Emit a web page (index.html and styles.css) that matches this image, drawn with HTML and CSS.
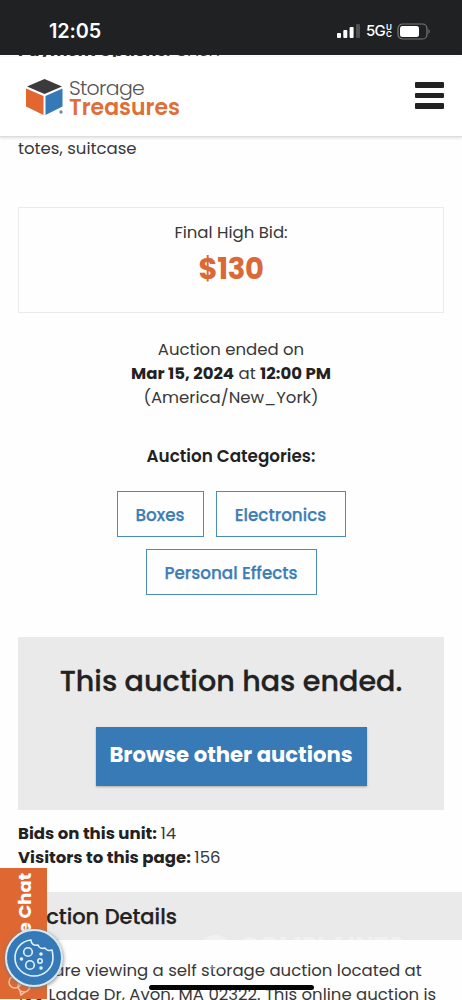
FILE: index.html
```html
<!DOCTYPE html>
<html lang="en">
<head>
<meta charset="utf-8">
<title>Storage Treasures</title>
<link rel="stylesheet" href="styles.css">
</head>
<body>
<div class="screen">
  <div class="status">
    <span class="clock">12:05</span>
    <div class="indicators">
      <svg class="signal" width="24" height="16" viewBox="0 0 24 16"><rect x="0" y="10" width="4" height="5" rx="1" fill="#fff"/><rect x="6.3" y="7" width="4" height="8" rx="1" fill="#fff"/><rect x="12.6" y="4" width="4" height="11" rx="1" fill="#fff"/><rect x="19" y="1" width="4" height="14" rx="1" fill="#505153"/></svg>
      <span class="net">5G</span><span class="uc"><span>U</span><span>C</span></span>
      <svg class="battery" width="34" height="17" viewBox="0 0 34 17"><rect x="1" y="1" width="29" height="15" rx="4.5" fill="none" stroke="#77787a" stroke-width="1.2"/><rect x="3" y="3" width="19" height="11" rx="2.5" fill="#fff"/><path d="M31.5 6 Q34 8.500 31.500 11Z" fill="#77787a"/></svg>
    </div>
  </div>
  <div class="clipped"><p class="payment"><b>Payment Options:</b> CASH</p></div>
  <header class="header">
    <div class="logo">
      <svg width="40" height="38" viewBox="0 0 40 38"><path d="M19.500 1 37 8.500 19.500 16 2 8.500Z" fill="#3b3b3d"/><path d="M1 10.500 18.500 18V37L1 28.500Z" fill="#e2662f"/><path d="M37.500 10.500 20.500 18V37L37.500 28.500Z" fill="#3579b8"/><circle cx="36" cy="34" r="3.200" fill="#fff"/><circle cx="36" cy="34" r="1.700" fill="#7b8793"/></svg>
      <div class="brand"><span class="brand-top">Storage</span><span class="brand-bottom">Treasures</span></div>
    </div>
    <div class="menu"><i></i><i></i><i></i></div>
  </header>
  <main class="main">
    <p class="contents">totes, suitcase</p>
    <section class="bid"><span>Final High Bid:</span><strong class="price">$130</strong></section>
    <section class="ended">
      <span>Auction ended on</span>
      <span><b>Mar 15, 2024</b> at <b>12:00 PM</b></span>
      <span>(America/New_York)</span>
    </section>
    <h3 class="cat-title">Auction Categories:</h3>
    <div class="cats"><a class="cat boxes">Boxes</a><a class="cat electronics">Electronics</a><a class="cat effects">Personal Effects</a></div>
    <section class="notice"><h2 class="notice-title">This auction has ended.</h2><a class="browse">Browse other auctions</a></section>
    <div class="stats"><p><b>Bids on this unit:</b>14</p><p><b>Visitors to this page:</b>156</p></div>
    <h3 class="details">Auction Details</h3>
    <div class="desc"><p>You are viewing a self storage auction located at</p><p>100 Ladge Dr, Avon, MA 02322. This online auction is</p></div>
  </main>
  <div class="watermark"><i></i><span>COMPLAINTS</span></div>
  <div class="chat"><span>Live Chat</span><svg width="24" height="22" viewBox="0 0 24 22" fill="none" stroke="#f5c3a9" stroke-width="1.500"><circle cx="7" cy="8" r="6"/><circle cx="16" cy="12" r="6"/><path d="M12 17 13 21 17 18"/></svg></div>
  <div class="home-bar"></div>
  <div class="cookie"><svg width="40" height="40" viewBox="0 0 40 40" fill="none" stroke="#dff3fc" stroke-width="1.600" stroke-linejoin="round"><path d="M17 2C7 3 1 11 1 20a19 18 0 0 0 38 0c0-3-.3-5-1-8-3 1-6 0-7-2-3 1-6 0-7-3-4 1-7-1-7-5Z"/><circle cx="14" cy="14" r="4.300"/><circle cx="16" cy="27" r="4.300"/><circle cx="26" cy="23" r="2.200"/><g fill="#dff3fc" stroke="none"><circle cx="27" cy="16" r="1.800"/><circle cx="7.500" cy="21" r="1.800"/><circle cx="27" cy="30" r="1.800"/></g></svg></div>
</div>
</body>
</html>
```

FILE: styles.css
```css
* { box-sizing: border-box; margin: 0; padding: 0; }
body { background: #fff; color: #383838; font: 16.55px/24px Poppins, Inter, "Open Sans", sans-serif; }
b, strong { font-weight: 700; color: #222; }
.screen { position: relative; width: 462px; height: 1000px; overflow: hidden; background: #fefefe; display: flex; flex-direction: column; }
.status { height: 55px; flex: none; background: #202123; color: #fff; display: flex; justify-content: space-between; padding: 19px 31px 0 49px; font-family: Inter, sans-serif; }
.clock { font-size: 19.8px; font-weight: 600; letter-spacing: -.1px; }
.indicators { display: flex; align-items: center; height: 24px; }
.signal { margin-right: 5px; }
.net { font-size: 15px; font-weight: 500; letter-spacing: -.9px; width: 20px; }
.uc { display: flex; flex-direction: column; font-size: 8px; line-height: 7px; font-weight: 600; margin-right: 5px; }
.clipped { height: 2px; flex: none; overflow: hidden; }
.payment { margin: -16px 0 0 18px; white-space: nowrap; }
.header { height: 80px; flex: none; background: #fff; border-bottom: 1px solid #ddd; box-shadow: 0 1px 3px #ddd; display: flex; justify-content: space-between; padding: 21px 18px 0 25px; }
.logo { display: flex; gap: 4px; }
.brand { display: flex; flex-direction: column; line-height: 20px; color: #555; }
.brand-top { font-size: 20.5px; font-weight: 300; letter-spacing: -.7px; }
.brand-bottom { font-size: 22px; font-weight: 600; line-height: 19px; color: #de6f39; }
.menu { display: flex; flex-direction: column; gap: 5px; padding-top: 4px; }
.menu i { width: 29px; height: 5.5px; border-radius: 1px; background: #222; }
.main { padding: 0 18px; display: flex; flex-direction: column; white-space: nowrap; }
.contents { height: 70px; }
.bid { height: 106px; border: 1px solid #eaeaea; display: flex; flex-direction: column; align-items: center; padding-top: 13px; }
.price { font-size: 29px; line-height: 49px; color: #db6837; letter-spacing: -.3px; }
.ended { margin-top: 25px; display: flex; flex-direction: column; align-items: center; }
.cat-title { margin-top: 34px; text-align: center; font-size: 16.8px; color: #222; font-weight: 600; }
.cats { align-self: center; width: 251px; display: flex; flex-wrap: wrap; justify-content: center; gap: 12px; margin-top: 23px; }
.cat { height: 46px; border: 1px solid #4a8abd; color: #3c7db6; font-size: 16.8px; font-weight: 500; line-height: 46px; text-align: center; }
.boxes { width: 87px; }
.electronics { width: 130px; }
.effects { width: 171px; }
.notice { margin-top: 42px; height: 173px; background: #eaeaea; display: flex; flex-direction: column; align-items: center; }
.notice-title { font-size: 28.6px; line-height: 36px; margin-top: 26px; font-weight: 500; color: #222; -webkit-text-stroke: .3px #222; }
.browse { width: 271px; height: 59px; margin-top: 28px; background: #377ab5; color: #fff; font-size: 21.2px; font-weight: 700; line-height: 55px; text-align: center; box-shadow: 0 1px 2px #aaa; }
.stats { margin-top: 12px; }
.stats b { margin-right: 3.5px; }
.details { margin: 22px -18px 0 0; height: 48px; background: #eaeaea; font-size: 21px; line-height: 50px; font-weight: 500; color: #222; -webkit-text-stroke: .25px #222; }
.cat { -webkit-text-stroke: .25px #3c7db6; }
.desc { margin-top: 19px; }
.watermark { position: absolute; left: 198px; top: 935px; height: 42px; overflow: hidden; display: flex; gap: 8px; color: #fff; opacity: .35; font-size: 25px; line-height: 22px; font-weight: 700; }
.watermark i { width: 34px; height: 34px; border-radius: 50%; border: 5px solid #fff; }
.chat { position: absolute; left: 0; top: 868px; width: 47px; height: 131px; background: #df6832; color: #fff; font-weight: 700; font-size: 18px; }
.chat span { position: absolute; left: 13px; top: 5px; writing-mode: vertical-rl; transform: rotate(180deg); white-space: nowrap; }
.chat svg { position: absolute; left: 8px; bottom: 3px; }
.home-bar { position: absolute; left: 149px; top: 985px; width: 165px; height: 5px; border-radius: 3px; background: #050505; }
.cookie { position: absolute; left: 5px; top: 929px; width: 58px; height: 58px; border-radius: 50%; background: #3579b8; border: 2px solid #d9eaf3; box-shadow: 0 1px 4px #777; display: flex; align-items: center; justify-content: center; }
```
